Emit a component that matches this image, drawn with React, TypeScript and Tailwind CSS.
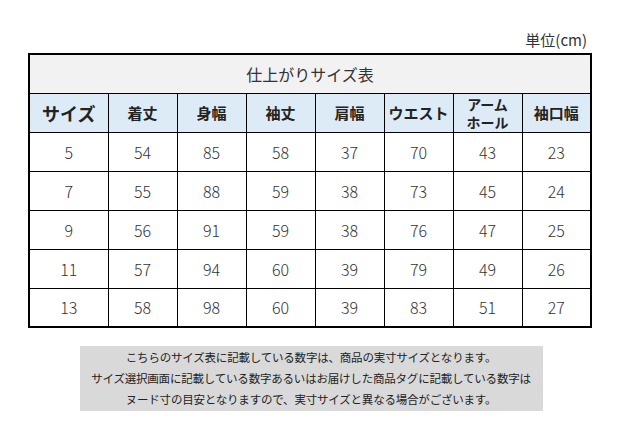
const cols = ["サイズ", "着丈", "身幅", "袖丈", "肩幅", "ウエスト", "アーム\nホール", "袖口幅"];

const rows = [
  [5, 54, 85, 58, 37, 70, 43, 23],
  [7, 55, 88, 59, 38, 73, 45, 24],
  [9, 56, 91, 59, 38, 76, 47, 25],
  [11, 57, 94, 60, 39, 79, 49, 26],
  [13, 58, 98, 60, 39, 83, 51, 27],
];

const App = () => {
  return (
    <div className="w-[622px] h-[429px] bg-white text-[#222] font-['Noto_Sans_CJK_JP',sans-serif]">
      {/*Unit label*/}
      <div className="pt-[29px] pr-[35px] text-right text-[15px] leading-[21px] text-[#333]">単位(cm)</div>

      {/*Size table*/}
      <table className="ml-[28px] mt-[3px] w-[563px] table-fixed border-collapse border-2 border-black">
        <colgroup>
          <col className="w-[79px]" />
          {cols.slice(1).map((c) => (
            <col key={c} className="w-[69px]" />
          ))}
        </colgroup>
        <thead>
          <tr className="h-[39px] bg-[#f2f2f2]">
            <th colSpan={8} className="border border-black text-[16px] font-normal text-[#333]">
              仕上がりサイズ表
            </th>
          </tr>
          <tr className="h-[39px] bg-[#ddebf7]">
            {cols.map((c, i) => (
              <th
                key={c}
                className={
                  i === 0
                    ? "border border-black text-[18px] font-bold leading-[22px]"
                    : c.includes("\n")
                    ? "border border-black text-[14px] font-bold leading-[18px] whitespace-pre-line"
                    : "border border-black text-[15px] font-bold leading-[20px]"
                }
              >
                {c}
              </th>
            ))}
          </tr>
        </thead>
        <tbody>
          {rows.map((r) => (
            <tr key={r[0]} className="h-[39px]">
              {r.map((v, i) => (
                <td key={i} className="border border-black text-center text-[16px] font-light text-[#333]">
                  {v}
                </td>
              ))}
            </tr>
          ))}
        </tbody>
      </table>

      {/*Note box*/}
      <div className="mx-auto mt-[18px] w-[463px] bg-[#d9d9d9] py-[1px] text-center text-[11.5px] leading-[21px] tracking-[-0.2px] whitespace-nowrap text-[#222]">
        <p>こちらのサイズ表に記載している数字は、商品の実寸サイズとなります。</p>
        <p>サイズ選択画面に記載している数字あるいはお届けした商品タグに記載している数字は</p>
        <p>ヌード寸の目安となりますので、実寸サイズと異なる場合がございます。</p>
      </div>
    </div>
  );
};

export default App;
